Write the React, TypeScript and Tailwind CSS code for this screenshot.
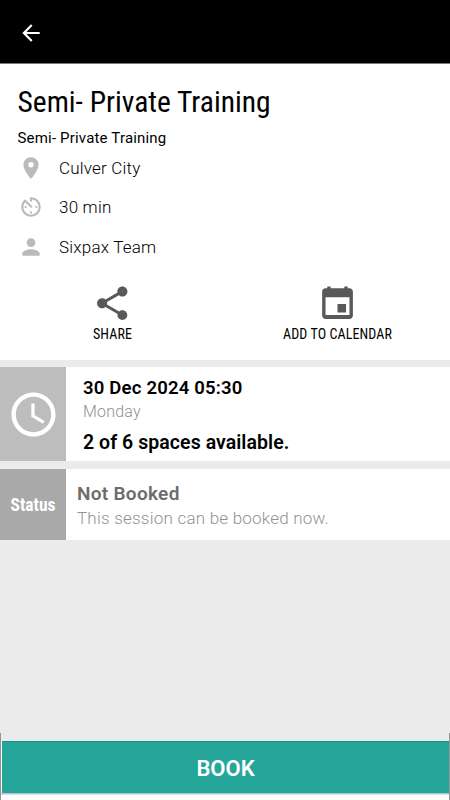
import type { ReactNode } from "react";
import {
  MdArrowBack,
  MdPlace,
  MdAvTimer,
  MdPerson,
  MdShare,
  MdAccessTime,
} from "react-icons/md";

function CalendarIcon() {
  return (
    <svg className="size-[41px]" viewBox="0 0 24 24" fill="currentColor">
      <path d="M17 12.3h-5v4.9h5v-4.9zM16 2v1H8V2H6v1H5c-1.11 0-1.99.9-1.99 2L3 19c0 1.1.89 2 2 2h14c1.1 0 2-.9 2-2V5c0-1.1-.9-2-2-2h-1V2h-2zm3 16.8H5V8.4h14v10.4z" />
    </svg>
  );
}

function Detail({ icon, children }: { icon: ReactNode; children: ReactNode }) {
  return (
    <div className="flex h-[39.5px] items-center pl-[17.5px]">
      <span className="w-[41.5px] text-[#bababa]">{icon}</span>
      <span className="text-[17px] leading-5 font-light tracking-[0.2px]">{children}</span>
    </div>
  );
}

function Action({ icon, children }: { icon: ReactNode; children: ReactNode }) {
  return (
    <button className="flex w-1/2 flex-col items-center text-[#595959]">
      <span className="flex h-[42px] items-center pr-px">{icon}</span>
      <span className="font-['Roboto_Condensed','Roboto',sans-serif] text-[14px] leading-5 tracking-[0.1px] text-black [font-stretch:75%]">
        {children}
      </span>
    </button>
  );
}

export default function App() {
  return (
    <div className="flex h-[800px] w-[450px] flex-col overflow-hidden bg-[#ebebeb] font-['Roboto',sans-serif] whitespace-nowrap text-black">
      <header className="flex h-16 shrink-0 items-center border-b border-[#777] bg-black pt-[3px] pl-[18px] text-white">
        <MdArrowBack size={26} />
      </header>

      <section className="h-[296px] shrink-0 bg-white pt-[20px]">
        <h1 className="pl-[17.5px] font-['Roboto_Condensed','Roboto',sans-serif] text-[29.5px] leading-9 [font-stretch:75%]">
          Semi- Private Training
        </h1>
        <p className="mt-[8px] pl-[17.5px] text-[15px] leading-5 tracking-[0.18px]">
          Semi- Private Training
        </p>
        <Detail icon={<MdPlace size={26} />}>Culver City</Detail>
        <Detail icon={<MdAvTimer size={26} />}>30 min</Detail>
        <Detail icon={<MdPerson size={26} />}>Sixpax Team</Detail>
        <div className="mt-[15.5px] flex">
          <Action icon={<MdShare size={40.5} />}>SHARE</Action>
          <Action icon={<CalendarIcon />}>ADD TO CALENDAR</Action>
        </div>
      </section>

      <section className="mt-[7px] flex h-[94px] shrink-0 bg-white">
        <div className="flex w-[66px] items-center justify-center bg-[#bdbdbd] text-white">
          <MdAccessTime size={53} />
        </div>
        <div className="pt-[9px] pl-[17px]">
          <p className="text-[18.5px] leading-6 font-semibold tracking-[0.2px]">30 Dec 2024 05:30</p>
          <p className="text-[16px] leading-6 font-light tracking-[0.2px] text-[#929292]">Monday</p>
          <p className="mt-[7px] text-[19.5px] leading-6 font-semibold tracking-[0.06px]">
            2 of 6 spaces available.
          </p>
        </div>
      </section>

      <section className="mt-2 flex h-[71px] shrink-0 bg-white">
        <div className="flex w-[66px] items-center justify-center bg-[#a9a9a9] pt-[2px] font-['Roboto_Condensed','Roboto',sans-serif] text-[17.5px] font-bold text-white [font-stretch:75%]">
          Status
        </div>
        <div className="pt-[13px] pl-[11px]">
          <p className="text-[19px] leading-6 font-semibold tracking-[0.3px] text-[#6c6c6c]">
            Not Booked
          </p>
          <p className="text-[17px] leading-6 font-light tracking-[0.22px] text-[#929292]">
            This session can be booked now.
          </p>
        </div>
      </section>

      <footer className="mt-auto flex h-[67px] shrink-0 border-x border-[#949494]">
        <div className="flex flex-1 flex-col bg-white">
          <div className="h-2 bg-[#ebebeb]" />
          <button className="ml-px flex h-[52px] items-center justify-center border-t border-[#159489] bg-[#26a69a] pt-px text-[22px] font-semibold text-white">
            BOOK
          </button>
          <div className="h-px bg-[#a9cdc9]" />
          <div className="h-px bg-[#dedede]" />
        </div>
      </footer>
    </div>
  );
}
